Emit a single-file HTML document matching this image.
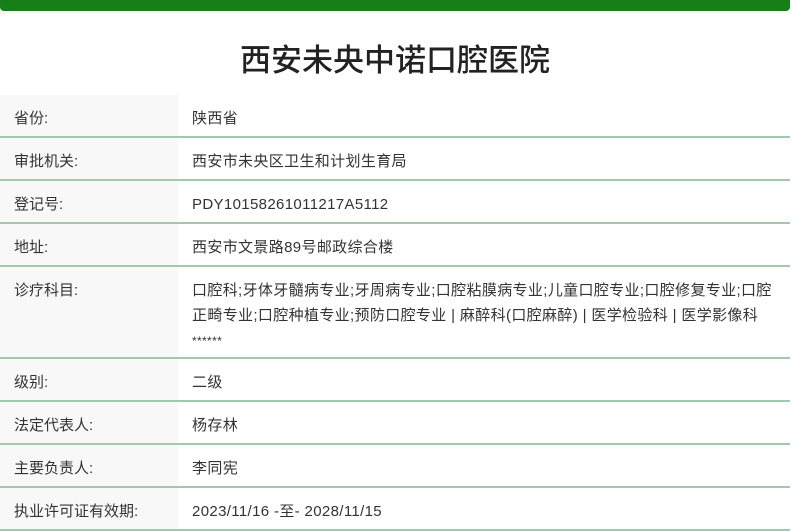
<!DOCTYPE html>
<html><head><meta charset="utf-8"><style>
body{margin:0;background:#fff;font-family:"Liberation Sans","Noto Sans CJK SC",sans-serif;color:#333;}
.wrap{width:790px;position:relative;}
.bar{height:11px;background:#167f1a;border-radius:0 0 4px 4px;}
h1{margin:0;height:84px;line-height:100px;text-align:center;font-size:31px;font-weight:500;color:#222;}
table{width:790px;border-collapse:collapse;font-size:15px;}
td{border-bottom:2px solid #a3c9ad;vertical-align:top;padding:11px 0 0 0;line-height:25px;height:30px;}
td.l{width:164px;background:#f8f8f8;padding-left:14px;}
td.v{padding-left:14px;padding-right:0;letter-spacing:0.35px;}
</style></head><body><div class="wrap">
<div class="bar"></div>
<h1>西安未央中诺口腔医院</h1>
<table>
<tr><td class="l">省份:</td><td class="v">陕西省</td></tr>
<tr><td class="l">审批机关:</td><td class="v">西安市未央区卫生和计划生育局</td></tr>
<tr><td class="l">登记号:</td><td class="v">PDY10158261011217A5112</td></tr>
<tr><td class="l">地址:</td><td class="v">西安市文景路89号邮政综合楼</td></tr>
<tr><td class="l" style="height:79px">诊疗科目:</td><td class="v">口腔科;牙体牙髓病专业;牙周病专业;口腔粘膜病专业;儿童口腔专业;口腔修复专业;口腔<br>正畸专业;口腔种植专业;预防口腔专业 | 麻醉科(口腔麻醉) | 医学检验科 | 医学影像科<br><span style="font-size:12px">******</span></td></tr>
<tr><td class="l">级别:</td><td class="v">二级</td></tr>
<tr><td class="l">法定代表人:</td><td class="v">杨存林</td></tr>
<tr><td class="l">主要负责人:</td><td class="v">李同宪</td></tr>
<tr><td class="l">执业许可证有效期:</td><td class="v">2023/11/16 -至- 2028/11/15</td></tr>
</table></div></body></html>
